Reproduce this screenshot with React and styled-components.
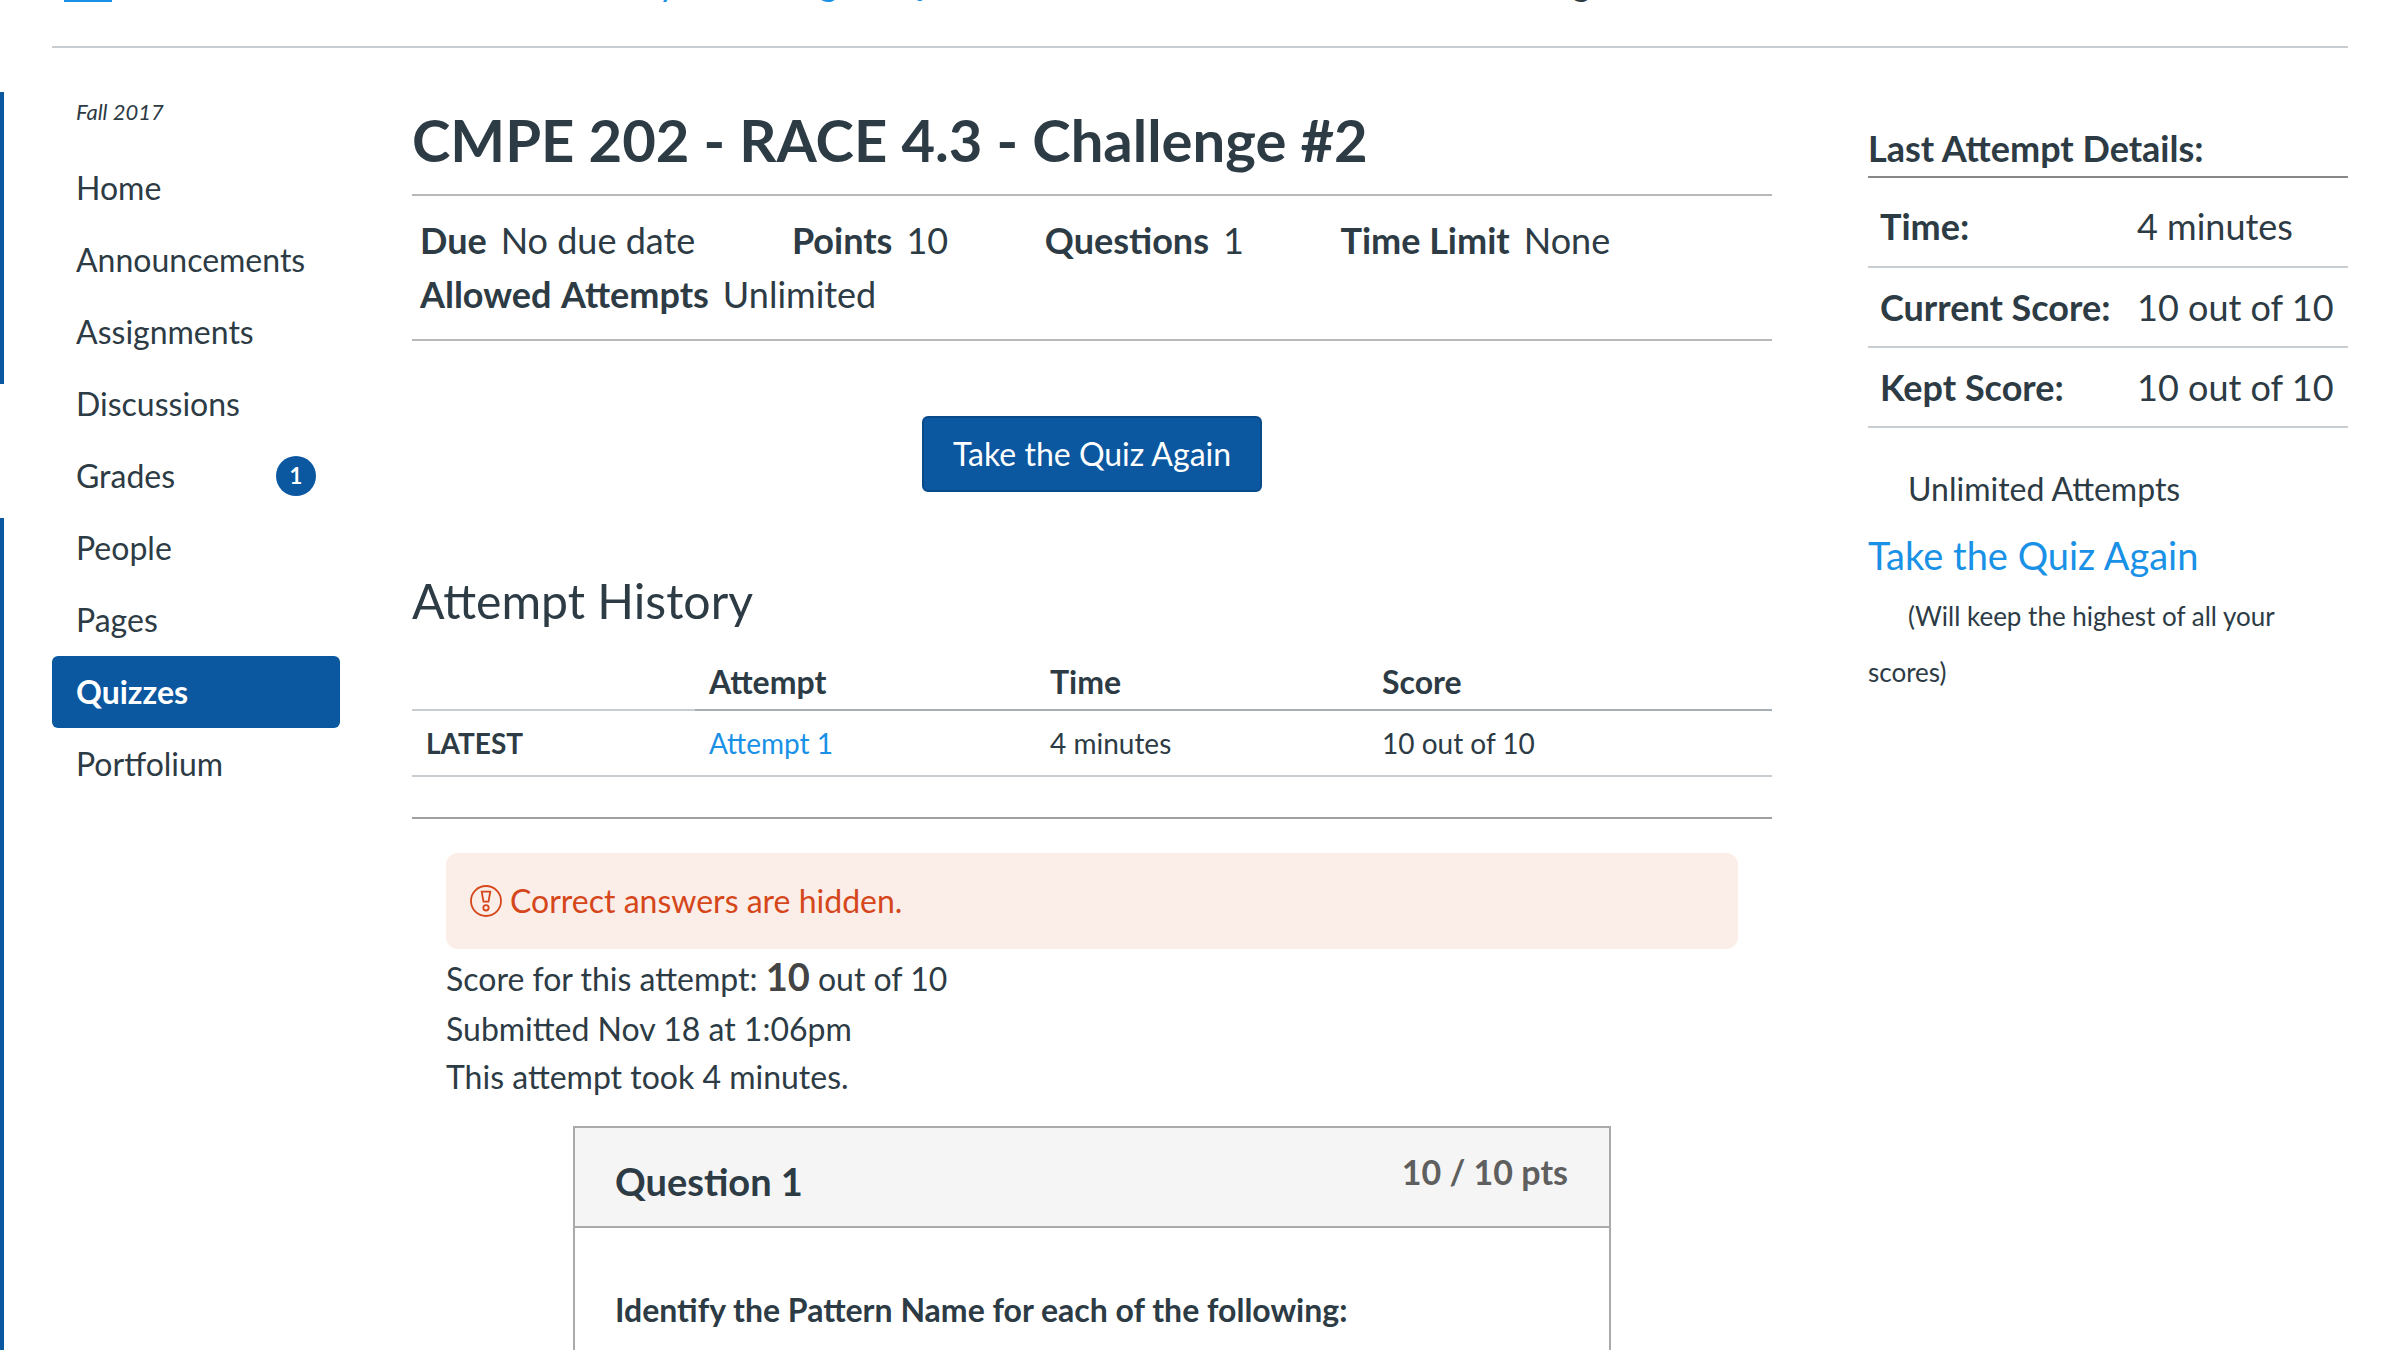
import React from "react";
import styled, { createGlobalStyle } from "styled-components";

const INK = "#2d3b45";
const BRAND = "#0b57a0";
const LINK = "#1991e6";

const GlobalStyle = createGlobalStyle`
  * { box-sizing: border-box; }
  html, body { margin: 0; padding: 0; background: #fff; }
  body { font-family: Lato, "Open Sans", sans-serif; color: ${INK}; font-size: 32px; overflow: hidden; }
  h1, h2, h3, p, ul { margin: 0; padding: 0; }
  ul { list-style: none; }
  a { color: ${LINK}; text-decoration: none; }
`;

const Page = styled.div`
  display: flex;
  width: 2394px;
  height: 1350px;
  overflow: hidden;
`;

const Rail = styled.div`
  display: flex;
  flex-direction: column;
  gap: 134px;
  width: 4px;
  padding-top: 92px;
  margin-right: 48px;
`;

const RailBar = styled.div`
  background: ${BRAND};
  ${(p) => (p.$h ? `height: ${p.$h}px;` : "flex: 1;")}
`;

const Content = styled.div`
  width: 2296px;
`;

const TopBar = styled.header`
  display: flex;
  align-items: flex-start;
  height: 48px;
  padding-left: 12px;
  overflow: hidden;
  border-bottom: 2px solid #c7cdd1;
`;

const MenuBar = styled.div`
  width: 48px;
  height: 2px;
  background: ${LINK};
`;

const Crumb = styled.span`
  margin: -42px 0 0 ${(p) => p.$gap}px;
  font-size: 36px;
  line-height: 48px;
  white-space: nowrap;
  color: ${(p) => (p.$current ? INK : LINK)};
`;

const Columns = styled.div`
  display: flex;
`;

const Nav = styled.nav`
  width: 288px;
  margin-right: 72px;
  padding-top: 48px;
`;

const Term = styled.div`
  padding-left: 24px;
  margin-bottom: 24px;
  font-size: 22px;
  font-style: italic;
  line-height: 32px;
`;

const NavItem = styled.div`
  display: flex;
  align-items: center;
  justify-content: space-between;
  height: 72px;
  padding: 0 24px;
  border-radius: 6px;
  line-height: 72px;
  ${(p) => p.$active && `background: ${BRAND}; color: #fff; font-weight: 700;`}
`;

const Badge = styled.span`
  width: 40px;
  height: 40px;
  border-radius: 50%;
  background: ${BRAND};
  color: #fff;
  font-size: 22px;
  font-weight: 700;
  line-height: 39px;
  text-align: center;
`;

const Main = styled.main`
  width: 1360px;
  margin-right: 96px;
  padding-top: 52px;
`;

const Title = styled.h1`
  margin-bottom: 14px;
  font-size: 58px;
  font-weight: 700;
  line-height: 80px;
`;

const Details = styled.ul`
  display: flex;
  flex-wrap: wrap;
  column-gap: 96.6px;
  height: 147px;
  padding: 17px 8px 18px;
  border: solid #b9b9b9;
  border-width: 2px 0;
  font-size: 36px;
  line-height: 54px;
`;

const Detail = styled.li`
  display: flex;
  gap: 14px;
  white-space: nowrap;
  word-spacing: ${(p) => (p.$wide ? 2 : 0)}px;
`;

const ButtonRow = styled.div`
  display: flex;
  justify-content: center;
  padding: 75px 0 78px;
`;

const PrimaryButton = styled.button`
  width: 340px;
  height: 76px;
  padding: 0;
  border: 2px solid #094b8a;
  border-radius: 6px;
  background: ${BRAND};
  color: #fff;
  font-family: inherit;
  font-size: 32px;
  line-height: 72px;
`;

const Heading = styled.h2`
  margin-bottom: -1px;
  font-size: 48.2px;
  font-weight: 400;
  line-height: 60px;
`;

const Row = styled.div`
  display: grid;
  grid-template-columns: 283px 341px 332px 404px;
`;

const HeadCell = styled.div`
  height: 82px;
  padding: 29px 14px 0;
  border-bottom: 2px solid ${(p) => (p.$blank ? "#c7cdd1" : "#a5afb5")};
  font-weight: 700;
  line-height: 48px;
`;

const Cell = styled.div`
  height: 66px;
  padding: 0 14px;
  border-bottom: 2px solid #c7cdd1;
  font-size: 28px;
  font-weight: ${(p) => (p.$strong ? 700 : 400)};
  line-height: 64px;
`;

const Submission = styled.section`
  margin-top: 40px;
  padding: 34px 34px 0;
  border-top: 2px solid #a0a0a0;
`;

const Alert = styled.div`
  display: flex;
  align-items: center;
  gap: 8px;
  height: 96px;
  margin-bottom: 6px;
  padding: 0 24px;
  border-radius: 12px;
  background: #fbede8;
  color: #d5471a;
`;

const AlertText = styled.span`
  line-height: 48px;
`;

const Line = styled.p`
  height: ${(p) => p.$h || 48}px;
  line-height: 48px;
  white-space: nowrap;
`;

const Score = styled.strong`
  color: #444;
  font-size: 38px;
  line-height: 1;
`;

const Question = styled.article`
  width: 1038px;
  height: 300px;
  margin: 25px auto 0;
  border: 2px solid #aaa;
`;

const QuestionHead = styled.div`
  display: flex;
  justify-content: space-between;
  height: 100px;
  padding: 0 41px 0 40px;
  border-bottom: 2px solid #aaa;
  background: #f5f5f5;
`;

const QuestionName = styled.h3`
  padding-top: 29px;
  font-size: 38px;
  line-height: 48px;
`;

const Points = styled.strong`
  padding-top: 20px;
  color: #5f5f5f;
  font-size: 34px;
  line-height: 48px;
`;

const QuestionText = styled.p`
  padding: 58px 40px 0;
  font-weight: 700;
  line-height: 48px;
`;

const Aside = styled.aside`
  width: 480px;
  padding-top: 76px;
`;

const AsideTitle = styled.h2`
  padding-bottom: 4px;
  border-bottom: 2px solid #888;
  font-size: 36px;
  line-height: 48px;
`;

const Stat = styled.div`
  display: grid;
  grid-template-columns: 257px 1fr;
  align-items: center;
  height: ${(p) => (p.$first ? 90 : 80)}px;
  padding: ${(p) => (p.$first ? 8 : 0)}px 0 0 12px;
  border-bottom: 2px solid #c7cdd1;
  font-size: 36px;
  line-height: 48px;
  white-space: nowrap;
`;

const Unlimited = styled.p`
  margin: 37px 0 18px;
  padding-left: 40px;
  line-height: 48px;
`;

const RetakeLink = styled.a`
  display: block;
  margin-bottom: 9px;
  font-size: 38px;
  line-height: 48px;
`;

const Note = styled.p`
  text-indent: 40px;
  font-size: 26px;
  line-height: 56px;
`;

const WarningIcon = () => (
  <svg width="32" height="32" viewBox="0 0 32 32" fill="none" stroke="currentColor" strokeWidth="1.8">
    <circle cx="16" cy="16" r="15" />
    <path d="M11.7 6.7h8.6l-1.8 10h-5z" />
    <circle cx="16" cy="22.8" r="2.7" />
  </svg>
);

const NAV = ["Home", "Announcements", "Assignments", "Discussions", "Grades", "People", "Pages", "Quizzes", "Portfolium"];
const DETAILS = [
  ["Due", "No due date"],
  ["Points", "10"],
  ["Questions", "1"],
  ["Time Limit", "None"],
  ["Allowed Attempts", "Unlimited"],
];
const STATS = [
  ["Time:", "4 minutes"],
  ["Current Score:", "10 out of 10"],
  ["Kept Score:", "10 out of 10"],
];

export default function App() {
  return (
    <>
      <GlobalStyle />
      <Page>
        <Rail>
          <RailBar $h={292} />
          <RailBar />
        </Rail>
        <Content>
          <TopBar>
            <MenuBar />
            <Crumb $gap={528}>Systems Engr</Crumb>
            <Crumb $gap={43}>Quizzes</Crumb>
            <Crumb $gap={436} $current>Challenge</Crumb>
          </TopBar>
          <Columns>
            <Nav>
              <Term>Fall 2017</Term>
              {NAV.map((name) => (
                <NavItem key={name} $active={name === "Quizzes"}>
                  {name}
                  {name === "Grades" && <Badge>1</Badge>}
                </NavItem>
              ))}
            </Nav>
            <Main>
              <Title>CMPE 202 - RACE 4.3 - Challenge #2</Title>
              <Details>
                {DETAILS.map(([label, value]) => (
                  <Detail key={label} $wide={label === "Allowed Attempts"}>
                    <strong>{label}</strong>
                    <span>{value}</span>
                  </Detail>
                ))}
              </Details>
              <ButtonRow>
                <PrimaryButton>Take the Quiz Again</PrimaryButton>
              </ButtonRow>
              <Heading>Attempt History</Heading>
              <Row>
                <HeadCell $blank />
                <HeadCell>Attempt</HeadCell>
                <HeadCell>Time</HeadCell>
                <HeadCell>Score</HeadCell>
              </Row>
              <Row>
                <Cell $strong>LATEST</Cell>
                <Cell><a>Attempt 1</a></Cell>
                <Cell>4 minutes</Cell>
                <Cell>10 out of 10</Cell>
              </Row>
              <Submission>
                <Alert>
                  <WarningIcon />
                  <AlertText>Correct answers are hidden.</AlertText>
                </Alert>
                <Line $h={50}>Score for this attempt: <Score>10</Score> out of 10</Line>
                <Line>Submitted Nov 18 at 1:06pm</Line>
                <Line>This attempt took 4 minutes.</Line>
                <Question>
                  <QuestionHead>
                    <QuestionName>Question 1</QuestionName>
                    <Points>10 / 10 pts</Points>
                  </QuestionHead>
                  <QuestionText>Identify the Pattern Name for each of the following:</QuestionText>
                </Question>
              </Submission>
            </Main>
            <Aside>
              <AsideTitle>Last Attempt Details:</AsideTitle>
              {STATS.map(([label, value], i) => (
                <Stat key={label} $first={i === 0}>
                  <strong>{label}</strong>
                  <span>{value}</span>
                </Stat>
              ))}
              <Unlimited>Unlimited Attempts</Unlimited>
              <RetakeLink>Take the Quiz Again</RetakeLink>
              <Note>(Will keep the highest of all your scores)</Note>
            </Aside>
          </Columns>
        </Content>
      </Page>
    </>
  );
}
